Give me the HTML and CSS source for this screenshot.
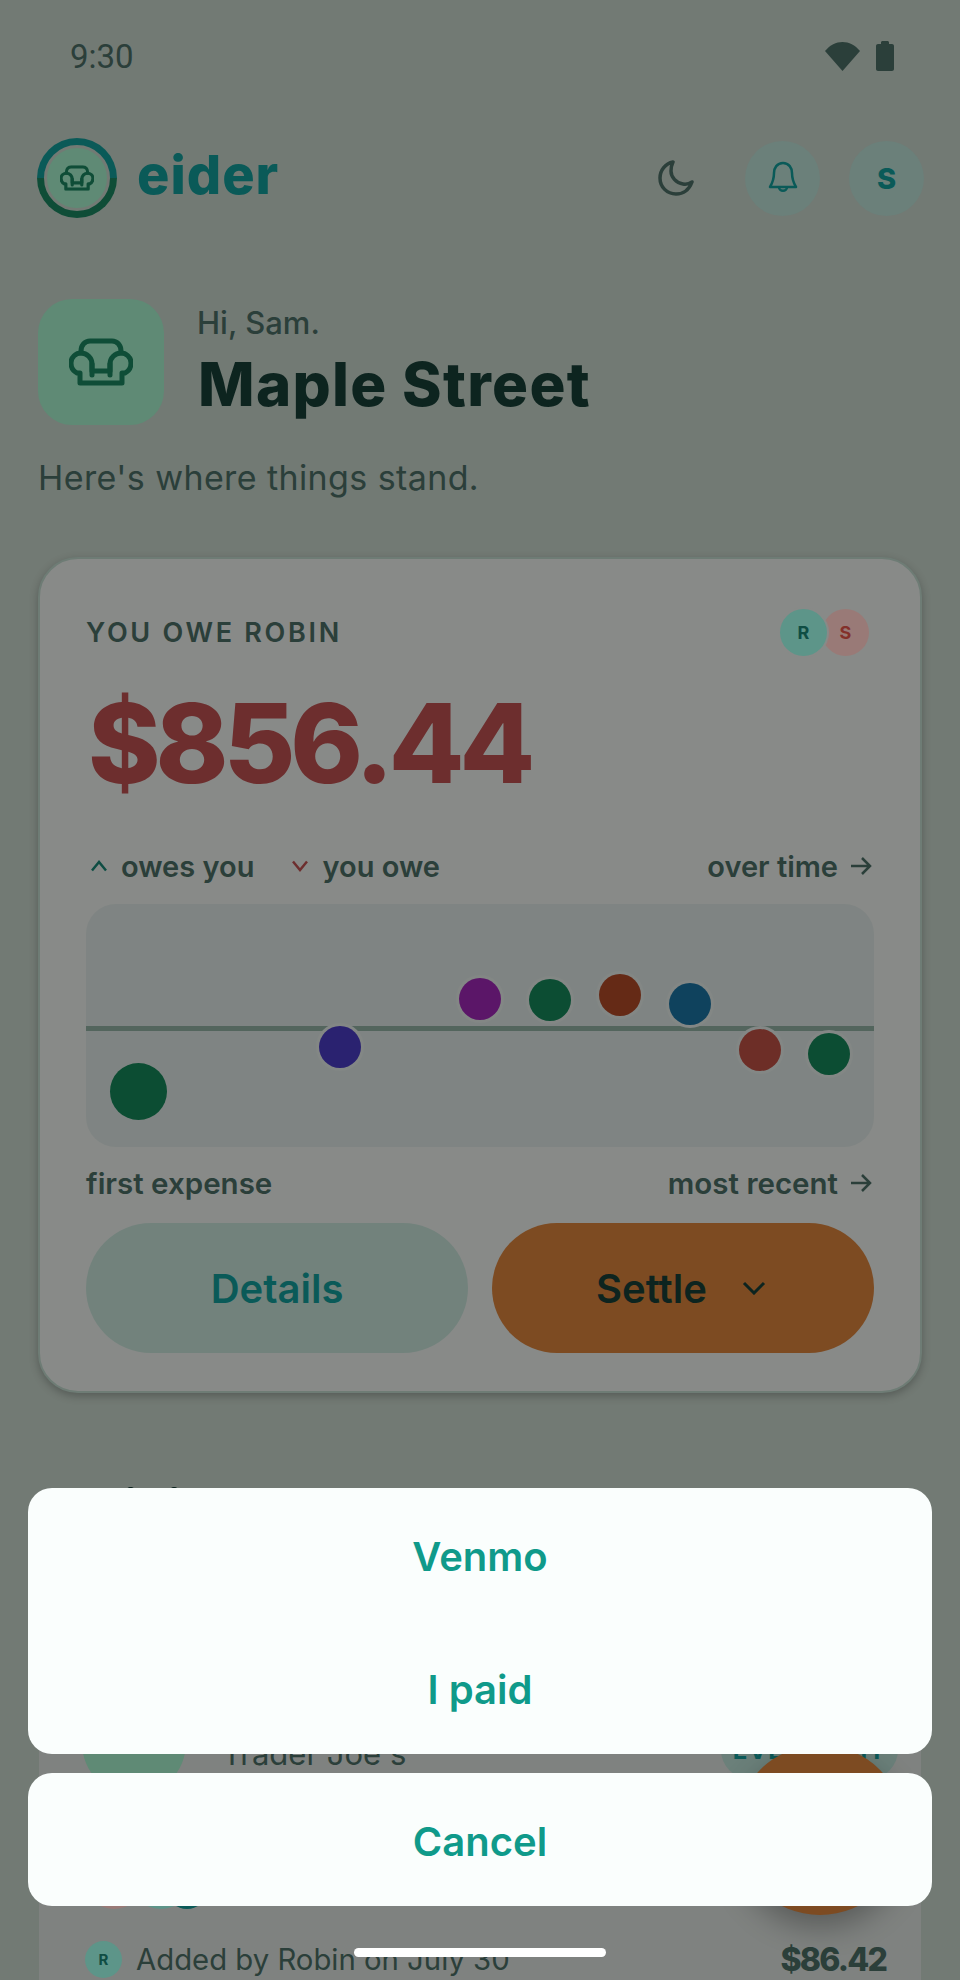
FILE: index.html
```html
<!doctype html>
<html lang="en">
<head>
    <meta charset="UTF-8">
    <title>eider</title>
    <link rel="stylesheet" href="styles.css">
</head>
<body>
<div class="screen">
    <div class="statusbar">
        <span class="clock">9:30</span>
        <div class="statusicons">
            <svg class="wifi" viewBox="0 0 35 29"><path d="M0 9C5 3 11 0 17.500 0S30 3 35 9L17.500 29Z"/></svg>
            <svg class="battery" viewBox="0 0 18 30"><path d="M5 3V1.500C5 .7 5.700 0 6.500 0H11.500C12.300 0 13 .7 13 1.500V3H16C17.100 3 18 3.900 18 5V28C18 29.100 17.100 30 16 30H2C.9 30 0 29.100 0 28V5C0 3.900 .9 3 2 3Z"/></svg>
        </div>
    </div>

    <header class="topbar">
        <div class="logo">
            <div class="logoring">
                <div class="logofill">
                    <svg class="chair small" viewBox="0 0 64 48"><use href="#chairshape"/></svg>
                </div>
            </div>
            <span class="logoname">eider</span>
        </div>
        <div class="topactions">
            <svg class="moon" viewBox="0 0 36 36"><path d="M15 2C7.500 3.500 2 10 2 18C2 27 9 34 18 34C25 34 31 30 34 22C31 24 28 24.500 25 24C18 23 13 17 13 11C13 8 13.500 5 15 2Z"/></svg>
            <div class="roundbtn">
                <svg class="bell" viewBox="0 0 30 34"><path d="M15 2C9 2 6 7 6 12C6 18 5 21 2 26H28C25 21 24 18 24 12C24 7 21 2 15 2Z"/><path d="M11 26C11 31 19 31 19 26"/></svg>
            </div>
            <div class="roundbtn"><span class="roundletter">S</span></div>
        </div>
    </header>

    <section class="house">
        <div class="housetile">
            <svg class="chair" viewBox="0 0 64 48"><use href="#chairshape"/></svg>
        </div>
        <div class="housetext">
            <div class="hello">Hi, Sam.</div>
            <h1 class="housename">Maple Street</h1>
        </div>
    </section>
    <p class="standing">Here's where things stand.</p>

    <section class="card">
        <div class="cardhead">
            <span class="owelabel">YOU OWE ROBIN</span>
            <div class="avatars">
                <span class="avatar avatar-r">R</span>
                <span class="avatar avatar-s">S</span>
            </div>
        </div>
        <div class="amount">$856.44</div>
        <div class="legend">
            <div class="legenditems">
                <span class="legenditem">
                    <svg class="chev up" viewBox="0 0 18 12"><path d="M2 10.500L9 2L16 10.500"/></svg>owes you
                </span>
                <span class="legenditem">
                    <svg class="chev down" viewBox="0 0 18 12"><path d="M2 1.500L9 10L16 1.500"/></svg>you owe
                </span>
            </div>
            <span class="axislink">over time<svg class="arrow" viewBox="0 0 22 20"><path d="M1 10H20M12 2L20 10L12 18"/></svg></span>
        </div>
        <div class="chart">
            <div class="midline"></div>
            <span class="dot dot-big green" style="left:52px;top:187px"></span>
            <span class="dot blue" style="left:254px;top:143px"></span>
            <span class="dot purple" style="left:394px;top:95px"></span>
            <span class="dot green" style="left:464px;top:96px"></span>
            <span class="dot brown" style="left:534px;top:91px"></span>
            <span class="dot steel" style="left:604px;top:100px"></span>
            <span class="dot red" style="left:674px;top:146px"></span>
            <span class="dot green" style="left:743px;top:150px"></span>
        </div>
        <div class="axis">
            <span>first expense</span>
            <span class="axislink">most recent<svg class="arrow" viewBox="0 0 22 20"><path d="M1 10H20M12 2L20 10L12 18"/></svg></span>
        </div>
        <div class="cardbtns">
            <button class="bigbtn details">Details</button>
            <button class="bigbtn settle">Settle<svg class="settlechev" viewBox="0 0 24 14"><path d="M2 2L12 12L22 2"/></svg></button>
        </div>
    </section>

    <h2 class="sectiontitle">Activity</h2>

    <section class="expense">
        <div class="expensetop">
            <div class="expensetile"></div>
            <span class="expensename">Trader Joe's</span>
            <span class="splitpill">EVEN SPLIT</span>
        </div>
        <div class="miniavatars">
            <span class="mini pink"></span>
            <span class="mini teal"></span>
            <span class="mini deep"></span>
        </div>
        <div class="expensefoot">
            <span class="avatar avatar-foot">R</span>
            <span class="addedby">Added by Robin on July 30</span>
            <span class="expenseamount">$86.42</span>
        </div>
    </section>

    <div class="fab"></div>
    <div class="scrim"></div>

    <div class="sheet">
        <div class="sheetgroup">
            <button class="sheetbtn">Venmo</button>
            <button class="sheetbtn">I paid</button>
        </div>
        <div class="sheetgroup">
            <button class="sheetbtn">Cancel</button>
        </div>
    </div>
    <div class="homebar"></div>
</div>

<svg class="defs" width="0" height="0">
    <symbol id="chairshape" viewBox="0 0 64 48">
        <path d="M12 15V13C12 7 16 3 21 3H43C48 3 52 7 52 13V15"/>
        <path d="M11 45H53V35H56C60 33 62 29 62 25C62 19 57 15 52 15C46 15 41 20 41 26V33H23V26C23 20 18 15 12 15C7 15 2 19 2 25C2 29 4 33 8 35H11Z"/>
        <path d="M23 26V37M41 26V37"/>
    </symbol>
</svg>
</body>
</html>
```
FILE: styles.css
```css
*{
    margin: 0;
    padding: 0;
    box-sizing: border-box;
}
html,body{
    width: 960px;
    height: 1980px;
    overflow: hidden;
}
body{
    font-family: "Inter", "Liberation Sans", sans-serif;
    color: #486961;
}
button{
    border: 0;
    font-family: inherit;
    background: none;
}
.defs{
    position: absolute;
}
.screen{
    position: relative;
    width: 960px;
    height: 1980px;
    overflow: hidden;
    background: #becbc1;
    display: flex;
    flex-direction: column;
    padding: 0 38px;
}

/* status bar */
.statusbar{
    height: 112px;
    flex: none;
    display: flex;
    align-items: center;
    justify-content: space-between;
    padding: 0 28px 0 32px;
}
.clock{
    font-family: "Roboto", sans-serif;
    font-size: 33px;
    color: #486961;
}
.statusicons{
    display: flex;
    align-items: center;
    gap: 16px;
}
.wifi{
    width: 35px;
    height: 29px;
    fill: #486961;
}
.battery{
    width: 18px;
    height: 30px;
    fill: #486961;
}

/* top bar */
.topbar{
    flex: none;
    height: 80px;
    margin-top: 26px;
    display: flex;
    align-items: center;
    justify-content: space-between;
}
.logo{
    display: flex;
    align-items: center;
    gap: 20px;
    margin-left: -1px;
}
.logoring{
    width: 80px;
    height: 80px;
    border-radius: 50%;
    background: linear-gradient(#129693 50%, #19805d 50%);
    padding: 7px;
}
.logofill{
    width: 100%;
    height: 100%;
    border-radius: 50%;
    background: #9ee6c3;
    border: 3px solid #becbc1;
    display: flex;
    align-items: center;
    justify-content: center;
}
.logoname{
    font-weight: 800;
    font-size: 54px;
    letter-spacing: 1px;
    color: #129693;
    line-height: 74px;
    margin-bottom: 6px;
}
.chair{
    width: 64px;
    height: 48px;
    fill: none;
    stroke: #19805d;
    stroke-width: 5;
    stroke-linejoin: round;
    stroke-linecap: round;
}
.chair.small{
    width: 34px;
    height: 26px;
    stroke-width: 6;
}
.topactions{
    display: flex;
    align-items: center;
    margin-right: -2px;
}
.moon{
    width: 36px;
    height: 36px;
    margin-right: 51px;
    fill: none;
    stroke: #486961;
    stroke-width: 3.5;
    stroke-linejoin: round;
}
.roundbtn{
    width: 75px;
    height: 75px;
    border-radius: 50%;
    background: #b2d5cb;
    margin-left: 29px;
    display: flex;
    align-items: center;
    justify-content: center;
}
.moon + .roundbtn{
    margin-left: 0;
}
.bell{
    width: 30px;
    height: 34px;
    fill: none;
    stroke: #129693;
    stroke-width: 2.500;
    stroke-linejoin: round;
}
.roundletter{
    font-weight: 800;
    font-size: 29px;
    color: #129693;
}

/* house heading */
.house{
    flex: none;
    margin-top: 81px;
    display: flex;
    align-items: center;
    gap: 34px;
}
.housetile{
    width: 126px;
    height: 126px;
    border-radius: 34px;
    background: #9ee6c3;
    display: flex;
    align-items: center;
    justify-content: center;
}
.housetext{
    display: flex;
    flex-direction: column;
}
.hello{
    font-size: 31px;
    line-height: 36px;
    font-weight: 500;
    color: #486961;
    margin-left: -1px;
}
.housename{
    font-weight: 800;
    font-size: 60px;
    letter-spacing: 1.300px;
    line-height: 70px;
    color: #163c35;
    margin-top: 8px;
}
.standing{
    flex: none;
    margin-top: 31px;
    font-size: 34px;
    letter-spacing: .4px;
    line-height: 44px;
    color: #486961;
}

/* balance card */
.card{
    flex: none;
    margin-top: 57px;
    height: 836px;
    border-radius: 40px;
    background: #e3e6e3;
    border: 2px solid #b7cfc3;
    box-shadow: 0 3px 8px rgba(0,0,0,.25);
    padding: 48px 46px 0 46px;
    display: flex;
    flex-direction: column;
}
.cardhead{
    display: flex;
    align-items: center;
    justify-content: space-between;
    height: 50px;
}
.owelabel{
    font-size: 27px;
    font-weight: 600;
    letter-spacing: 2.700px;
    color: #486a61;
}
.avatars{
    display: flex;
    margin-right: 5px;
}
.avatar{
    width: 47px;
    height: 47px;
    border-radius: 50%;
    display: flex;
    align-items: center;
    justify-content: center;
    font-size: 18px;
    font-weight: 700;
}
.avatar-s{
    background: #ffccc6;
    color: #da5046;
    margin-left: -5px;
}
.avatar-r{
    background: #9bf8e4;
    color: #198071;
    position: relative;
    box-shadow: 0 0 0 2px #e3e6e3;
}
.amount{
    font-weight: 800;
    font-size: 110px;
    letter-spacing: -5px;
    line-height: 130px;
    color: #b64e4e;
    margin: 21px 0 0 2px;
}
.legend{
    margin-top: 40px;
    display: flex;
    align-items: center;
    justify-content: space-between;
    height: 36px;
    font-size: 29px;
    font-weight: 600;
    color: #486a61;
}
.legenditems{
    display: flex;
    gap: 37px;
    margin-left: 4px;
}
.legenditem{
    display: flex;
    align-items: center;
    gap: 13px;
}
.chev{
    width: 18px;
    height: 12px;
    fill: none;
    stroke-width: 2.500;
}
.chev.up{
    stroke: #198071;
}
.chev.down{
    stroke: #b64e4e;
}
.axislink{
    display: flex;
    align-items: center;
    gap: 12px;
    margin-right: 2px;
}
.arrow{
    width: 22px;
    height: 20px;
    fill: none;
    stroke: #486a61;
    stroke-width: 2.500;
}
.chart{
    position: relative;
    margin-top: 20px;
    height: 243px;
    border-radius: 30px;
    background: #d4ddda;
    flex: none;
}
.midline{
    position: absolute;
    left: 0;
    right: 0;
    top: 122px;
    height: 5px;
    background: #8aa89c;
}
.dot{
    position: absolute;
    width: 42px;
    height: 42px;
    border-radius: 50%;
    margin: -21px 0 0 -21px;
    box-shadow: 0 0 0 3px #dae1de;
}
.dot-big{
    width: 57px;
    height: 57px;
    margin: -28px 0 0 -28px;
    box-shadow: none;
}
.green{background: #148055;}
.blue{background: #4639bb;}
.purple{background: #9826ad;}
.brown{background: #a84626;}
.steel{background: #1a6f9c;}
.red{background: #b64d41;}
.axis{
    margin-top: 18px;
    height: 36px;
    display: flex;
    align-items: center;
    justify-content: space-between;
    font-size: 29.500px;
    font-weight: 600;
    color: #486a61;
}
.cardbtns{
    margin-top: 22px;
    display: flex;
    gap: 24px;
}
.bigbtn{
    flex: 1;
    height: 130px;
    border-radius: 65px;
    font-size: 40px;
    font-weight: 600;
    display: flex;
    align-items: center;
    justify-content: center;
}
.details{
    background: #bed9cf;
    color: #129693;
}
.settle{
    background: #d07d39;
    color: #163c35;
    gap: 35px;
}
.settlechev{
    width: 24px;
    height: 14px;
    margin-right: 4px;
    fill: none;
    stroke: #163c35;
    stroke-width: 3;
}

/* activity, mostly behind the sheet */
.sectiontitle{
    flex: none;
    margin-top: 86px;
    font-weight: 800;
    font-size: 54px;
    letter-spacing: -2.500px;
    line-height: 60px;
    color: #163c35;
}
.expense{
    flex: none;
    margin: 61px 1px 0 1px;
    height: 400px;
    border-radius: 40px 40px 0 0;
    background: #d4d9d5;
    padding: 91px 23px 0 43px;
    display: flex;
    flex-direction: column;
}
.expensetop{
    height: 104px;
    display: flex;
    align-items: center;
}
.expensetile{
    width: 104px;
    height: 104px;
    border-radius: 50%;
    background: #9ee6c3;
    flex: none;
}
.expensename{
    font-size: 31px;
    margin: 20px 0 0 36px;
    color: #486a61;
}
.splitpill{
    margin: 14px 0 0 auto;
    width: 177px;
    height: 58px;
    border-radius: 29px;
    background: #b2d5cb;
    color: #129693;
    font-size: 24px;
    font-weight: 700;
    letter-spacing: 1.500px;
    white-space: nowrap;
    display: flex;
    align-items: center;
    justify-content: center;
}
.miniavatars{
    display: flex;
    align-items: flex-end;
    margin-top: 50px;
}
.mini{
    width: 64px;
    height: 64px;
    border-radius: 50%;
}
.pink{background: #ffccc6;}
.teal{
    background: #9bf8e4;
    margin-left: -17px;
}
.mini.deep{
    width: 40px;
    height: 40px;
    margin-left: -26px;
    background: #129693;
}
.expensefoot{
    margin: 31px 0 0 3px;
    display: flex;
    align-items: center;
    gap: 14px;
}
.avatar-foot{
    width: 37px;
    height: 37px;
    background: #9bf8e4;
    color: #198071;
    font-size: 15px;
}
.addedby{
    font-size: 29.300px;
    color: #486a61;
}
.expenseamount{
    margin: 0 12px 0 auto;
    font-weight: 800;
    font-size: 32px;
    letter-spacing: -1.800px;
    color: #486a61;
}
.fab{
    position: absolute;
    left: 735px;
    top: 1745px;
    width: 170px;
    height: 170px;
    border-radius: 50%;
    background: #d07d39;
    box-shadow: 0 12px 30px rgba(0,0,0,.3);
}

/* overlay */
.scrim{
    position: absolute;
    left: 0;
    top: 0;
    right: 0;
    bottom: 0;
    background: rgba(0,0,0,.4);
}
.sheet{
    position: absolute;
    left: 28px;
    top: 1488px;
    width: 904px;
    display: flex;
    flex-direction: column;
    gap: 19px;
}
.sheetgroup{
    border-radius: 24px;
    background: #fafefd;
    display: flex;
    flex-direction: column;
}
.sheetbtn{
    height: 133px;
    padding-top: 3px;
    font-size: 40px;
    font-weight: 600;
    color: #0f9a8a;
}
.homebar{
    position: absolute;
    left: 354px;
    top: 1948px;
    width: 252px;
    height: 9px;
    border-radius: 5px;
    background: #fff;
}
```
